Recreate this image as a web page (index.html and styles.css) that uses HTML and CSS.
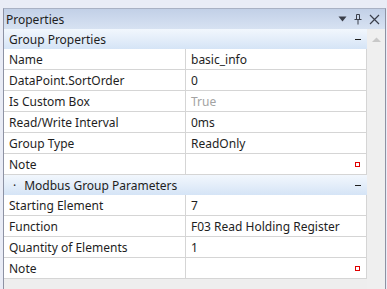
FILE: index.html
```html
<!DOCTYPE html>
<html lang="en">

<head>
    <meta charset="UTF-8">
    <title>Properties</title>
    <link rel="stylesheet" href="styles.css">
</head>

<body>

    <div class="panel">
        <!-- Title bar -->
        <div class="titlebar">
            <span class="title">Properties</span>
            <span class="tools">
                <svg width="9" height="6" viewBox="0 0 9 6"><path d="M0.5 0.5h8l-4 5z" fill="#3b3f4a"/></svg>
                <svg width="8" height="12" viewBox="0 0 8 12"><path d="M2.5 1.5h3v5M2.5 1.5v5M0.5 6.5h7M4 6.5v5" stroke="#3b3f4a" fill="none"/></svg>
                <svg width="11" height="11" viewBox="0 0 11 11"><path d="M1 1l9 9M10 1l-9 9" stroke="#3b3f4a" stroke-width="1.2"/></svg>
            </span>
        </div>

        <div class="body">
            <div class="grid">
                <div class="group">
                    <span class="group-name">Group Properties</span>
                    <span class="toggle"></span>
                </div>
                <div class="row"><span class="label">Name</span><span class="value">basic_info</span></div>
                <div class="row"><span class="label">DataPoint.SortOrder</span><span class="value">0</span></div>
                <div class="row"><span class="label">Is Custom Box</span><span class="value muted">True</span></div>
                <div class="row"><span class="label">Read/Write Interval</span><span class="value">0ms</span></div>
                <div class="row"><span class="label">Group Type</span><span class="value">ReadOnly</span></div>
                <div class="row"><span class="label">Note</span><span class="value"><i class="edit"></i></span></div>

                <div class="group">
                    <span class="group-name"><b class="dot">·</b>Modbus Group Parameters</span>
                    <span class="toggle"></span>
                </div>
                <div class="row"><span class="label">Starting Element</span><span class="value">7</span></div>
                <div class="row"><span class="label">Function</span><span class="value">F03 Read Holding Register</span></div>
                <div class="row"><span class="label">Quantity of Elements</span><span class="value">1</span></div>
                <div class="row"><span class="label">Note</span><span class="value"><i class="edit"></i></span></div>
            </div>

            <!-- Vertical scrollbar -->
            <div class="scrollbar">
                <svg width="9" height="5" viewBox="0 0 9 5"><path d="M0 5h9L4.5 0.5z" fill="#c8c8c8"/></svg>
            </div>
        </div>
    </div>

</body>

</html>
```

FILE: styles.css
```css
/* Page */
body {
    margin: 0;
    background-color: #e9ecf6;
    font-family: "Noto Sans", "Open Sans", sans-serif;
    font-size: 12px;
    color: #1e1e1e;
}

/* Panel frame */
.panel {
    margin: 8px 1px 0 3px;
    height: 281px;
    border-left: 1px solid #8d92a4;
    border-right: 1px solid #8d92a4;
    border-top: 1px solid #a9b1c4;
    display: flex;
    flex-direction: column;
}

/* Title bar */
.titlebar {
    height: 20px;
    display: flex;
    align-items: center;
    justify-content: space-between;
    padding: 0 5px 0 2px;
    background: linear-gradient(#c2d0e7, #d7e2f2);
}

.tools {
    display: flex;
    align-items: center;
    gap: 7px;
}

/* Grid and scrollbar */
.body {
    flex: 1;
    display: flex;
    background-color: #eeeeee;
}

.grid {
    flex: 1;
}

.scrollbar {
    width: 18px;
    display: flex;
    justify-content: center;
    padding-top: 8px;
    background-color: #efefef;
}

.scrollbar svg {
    display: block;
}

/* Category rows */
.group {
    height: 20px;
    display: flex;
    align-items: center;
    justify-content: space-between;
    padding: 0 6px 0 5px;
    background: linear-gradient(#f2f7fd, #d5e4f6);
}

.dot {
    font-weight: normal;
    margin: 0 8px 0 4px;
}

.toggle {
    width: 6px;
    height: 1px;
    margin-top: 1px;
    background-color: #1e1e1e;
}

/* Property rows */
.row {
    height: 20px;
    display: flex;
    background-color: #ffffff;
    border-bottom: 1px solid #d5d5d5;
    border-right: 1px solid #d5d5d5;
}

.label,
.value {
    display: flex;
    align-items: center;
    padding-left: 5px;
}

.label {
    width: 176px;
    border-right: 1px solid #d5d5d5;
}

.value {
    flex: 1;
    padding-right: 6px;
}

.muted {
    color: #a3a3a3;
}

.edit {
    margin-left: auto;
    width: 3px;
    height: 3px;
    border: 1px solid #e00000;
}
```
